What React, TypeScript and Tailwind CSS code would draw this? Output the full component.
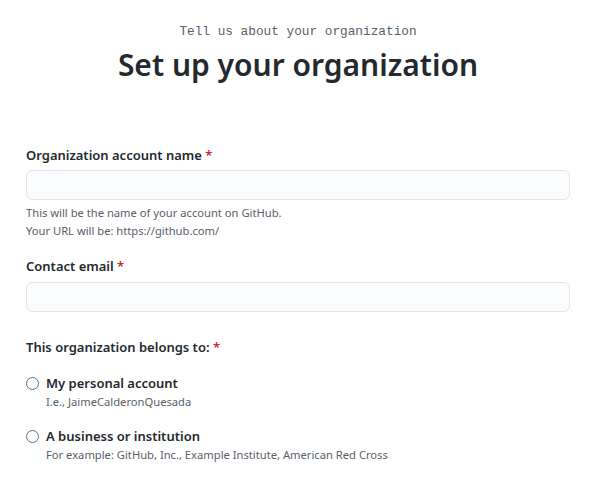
import React from 'react'

const Required = () => <span className="text-[#cb2431]"> *</span>

export default function App() {
  return (
    <div className="min-h-screen bg-white pl-[26px] pr-[24px] text-[#24292e] [font-family:'Noto_Sans',sans-serif]">
      {/* Header */}
      <div className="pt-[22px] text-center">
        <p className="text-[12.75px] leading-5 text-[#586069] [font-family:'Liberation_Mono',monospace]">
          Tell us about your organization
        </p>
        <h1 className="mt-[3px] text-[30px] font-semibold leading-[40px]">Set up your organization</h1>
      </div>

      {/* Form */}
      <form className="mt-[60px]">
        <div>
          <label className="block text-[13px] font-semibold leading-5">
            Organization account name<Required />
          </label>
          <input
            type="text"
            className="mt-[5px] block h-[30px] w-full rounded-md border border-[#e1e4e8] bg-[#fafbfc] px-2 text-sm outline-none"
          />
          <p className="mt-[4px] text-[11.2px] leading-[18px] text-[#586069]">
            This will be the name of your account on GitHub.
            <br />
            Your URL will be: https://github.com/
          </p>
        </div>

        <div className="mt-4">
          <label className="block text-[13px] font-semibold leading-5">
            Contact email<Required />
          </label>
          <input
            type="email"
            className="mt-[6px] block h-[30px] w-full rounded-md border border-[#e1e4e8] bg-[#fafbfc] px-2 text-sm outline-none"
          />
        </div>

        <div className="mt-[25px]">
          <p className="text-[13px] font-semibold leading-5">
            This organization belongs to:<Required />
          </p>

          <div className="mt-4">
            <label className="flex items-center gap-[7px] text-[13px] font-semibold leading-5">
              <span className="h-[13px] w-[13px] rounded-full border border-[#6a737d] bg-white" />
              My personal account
            </label>
            <p className="pl-5 text-[11.2px] leading-[18px] text-[#586069]">I.e., JaimeCalderonQuesada</p>
          </div>

          <div className="mt-[15px]">
            <label className="flex items-center gap-[7px] text-[13px] font-semibold leading-5">
              <span className="h-[13px] w-[13px] rounded-full border border-[#6a737d] bg-white" />
              A business or institution
            </label>
            <p className="pl-5 text-[11.2px] leading-[18px] text-[#586069]">
              For example: GitHub, Inc., Example Institute, American Red Cross
            </p>
          </div>
        </div>
      </form>
    </div>
  )
}
